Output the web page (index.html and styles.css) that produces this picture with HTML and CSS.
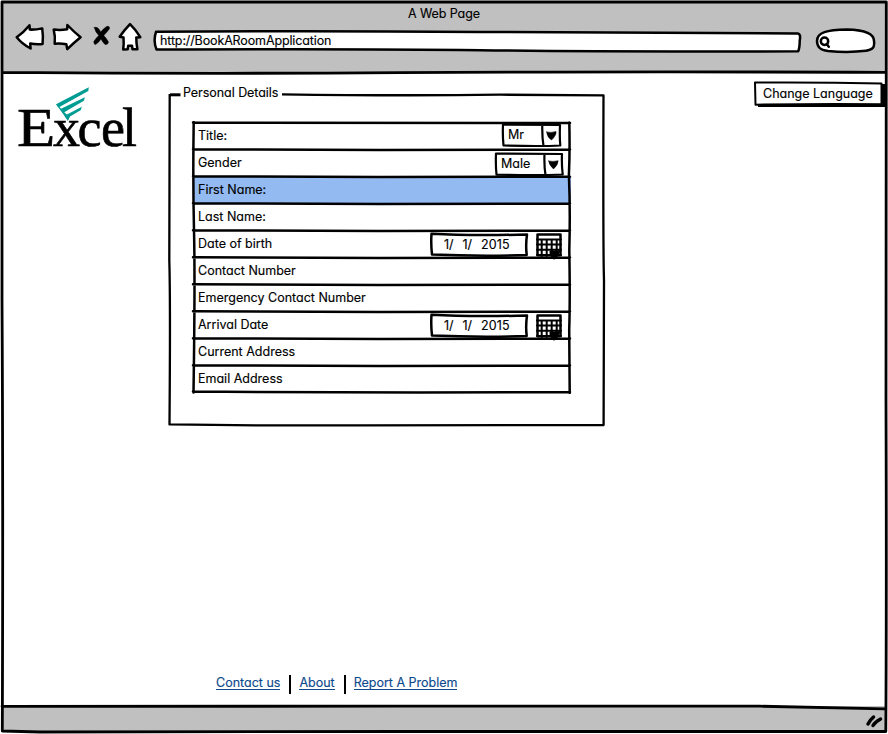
FILE: index.html
```html
<!DOCTYPE html>
<html lang="en">
<head>
<meta charset="utf-8">
<title>A Web Page</title>
<link rel="stylesheet" href="styles.css">
</head>
<body>
<div class="window">
  <header class="chrome">
    <div class="window-title">A Web Page</div>
    <div class="toolbar">
      <svg class="nav back" viewBox="14 22 32 30"><path d="M16.7 37.3Q24 32 29.5 25.2L29.8 29.6Q36 29.8 42.2 28.4Q43.400 36 42.600 44Q36 44.600 30.200 43.500L30.600 48.500Q22 44 16.700 37.300Z"/></svg>
      <svg class="nav forward" viewBox="50 22 34 30"><path d="M53.700 29.600Q60 30.600 67.200 29.300L67.400 25Q74 32 80.600 37.200Q74 42.500 67.300 49.200L66.300 44.300Q60 43 54.700 43.800Q55.400 36 53.700 29.600Z"/></svg>
      <svg class="nav stop" viewBox="92 24 20 24"><path class="solid" d="M94.300 27.500Q98 26 100.700 32Q104 28 107 26.200Q110 26 109.500 28.700Q107 32 103.800 35.500Q106.500 38.500 108.500 42Q108 45 105 44.500Q102.500 42 101 39Q98.500 43 95.500 44.600Q93.500 44 93.800 41.500Q96 38 98.800 35.500Q95 31.500 94.300 27.500Z"/></svg>
      <svg class="nav home" viewBox="117 21 26 31"><path d="M130 24.200Q124 30.500 119.700 36.800L123.500 37.400Q124 44 123.200 49.400L127.700 49.200L128.200 45.800H132L132.500 49.200L137.400 49.300Q136.200 43 136.300 37.600L140.300 37.200Q135.500 29.500 130 24.200Z"/></svg>
      <div class="address">
        <svg viewBox="153 30 649 24"><path d="M156 31.800Q300 30.800 480 31.900T798 33.500Q801 34 799.700 41Q799.700 48 798.200 51.300Q600 51.900 480 50.200T156.500 49.500Q153 41 156 31.800Z"/></svg>
        <span class="t url">http://BookARoomApplication</span>
      </div>
      <svg class="search" viewBox="814 27 63 27"><path d="M817 41C817 32 827 30 847 29.500C867 30 874 34 874 41C875 48 872 50 866 50.800Q848 53 828 51C820 50 817 47 817 41Z"/><circle cx="824.500" cy="41.300" r="3.700"/><path d="M827 44.500L828.800 46.800"/></svg>
    </div>
  </header>

  <main class="page">
    <svg class="logo" viewBox="14 84 126 76" role="img" aria-label="Excel">
      <g class="feather"><path d="M56 104.300L88.800 87.300L88.300 91L58.500 107.500Z"/><path d="M60.500 109L84.900 97.200L83.900 100.700L63 113Z"/><path d="M64.500 115.800L81.900 106.700L80.600 110.200L70 116.500L67.800 120.800Z"/><path d="M56 104.300L58.500 106L64 112L69.500 117L67.800 120.800L63.500 114.500Z"/></g>
      <text transform="translate(17 146) scale(1.16 1)" x="0" y="0">E</text>
      <text x="53 77.500 101 122" y="146">xcel</text>
    </svg>

    <section class="group">
      <svg class="outline" viewBox="167 91 440 337"><path class="stub" d="M180.500 94.800H170"/><path d="M282 94.300Q400 96 500 94.700L603.500 95.300Q603 250 604 280L603.600 425Q450 424.700 360 425.300T169.500 424.400Q170.500 300 169.300 260L169.700 94"/></svg>
      <h1 class="t legend">Personal Details</h1>
      <div class="grid">
        <svg class="rules" viewBox="191 121 381 273"><path d="M193 122.600Q380 122.300 570 123M193 149.300L380 150 570 149.500M193 176.300L380 177 570 176.700M193 203.200L380 204 570 203.500M193 230.300L380 231 570 230.600M193 257.300L380 258 570 257.500M193 284.300L380 285 570 284.500M193 311.300L380 312 570 311.600M193 338.200L380 339 570 338.500M193 365.200L380 366 570 365.500M193 391.500Q380 393 570 392M193.700 122Q192.800 180 194 230T193.500 392.500M569.300 122.500Q570 150 568.900 175Q570.400 210 569.300 250Q570.200 300 569.200 330L569.700 393"/></svg>
        <div class="row"><span class="t">Title:</span>
          <div class="select select-title"><svg viewBox="501 123 61 25"><path d="M503 124.500L560 125Q559.500 138 560.300 145.500Q540 146.500 503.500 145.500Q502.500 135 503 124.500ZM542.300 125Q542 136 543.500 146"/><path class="solid" d="M546.700 132Q551 133 556 131.500Q556.800 135 551.500 140Q547 137 546.700 132Z"/></svg><span class="t">Mr</span></div></div>
        <div class="row"><span class="t">Gender</span>
          <div class="select select-gender"><svg viewBox="494 151 70 26"><path d="M496 153.500L562 154Q561.500 164 562.700 174.500Q540 175.500 496.500 174.700Q495.500 164 496 153.500ZM544.500 154Q544 166 545.500 175"/><path class="solid" d="M548.700 161Q553 162 558.200 160.700Q558 165 553.500 169Q549 165 548.700 161Z"/></svg><span class="t">Male</span></div></div>
        <div class="row selected"><span class="t">First Name:</span></div>
        <div class="row"><span class="t">Last Name:</span></div>
        <div class="row"><span class="t">Date of birth</span>
          <div class="date"><svg class="datebox" viewBox="429 231 100 27"><path d="M431.500 233.700Q470 236 527 234.500Q525.500 245 526.700 255Q480 256.500 432 254.500Q430.800 245 431.500 233.700Z"/></svg><span class="t d1">1/</span><span class="t d2">1/</span><span class="t d3">2015</span></div>
          <svg class="calendar" viewBox="535 232 28 30"><path d="M537.500 234.500H560.500V255.300H537.500Z"/><path class="cells" d="M537 239.500H561M537 244.500H561M537 249.700H561M537 255H561M541.700 240V256M546.700 240V256M551.700 240V256M556.700 240V256"/><path class="solid" d="M550 251L560 250.500Q559 256 554 259.500Q552 256 550 254Z"/></svg></div>
        <div class="row"><span class="t">Contact Number</span></div>
        <div class="row"><span class="t">Emergency Contact Number</span></div>
        <div class="row"><span class="t">Arrival Date</span>
          <div class="date"><svg class="datebox" viewBox="429 231 100 27"><path d="M431.500 233.700Q470 236 527 234.500Q525.500 245 526.700 255Q480 256.500 432 254.500Q430.800 245 431.500 233.700Z"/></svg><span class="t d1">1/</span><span class="t d2">1/</span><span class="t d3">2015</span></div>
          <svg class="calendar" viewBox="535 232 28 30"><path d="M537.500 234.500H560.500V255.300H537.500Z"/><path class="cells" d="M537 239.500H561M537 244.500H561M537 249.700H561M537 255H561M541.700 240V256M546.700 240V256M551.700 240V256M556.700 240V256"/><path class="solid" d="M550 251L560 250.500Q559 256 554 259.500Q552 256 550 254Z"/></svg></div>
        <div class="row"><span class="t">Current Address</span></div>
        <div class="row"><span class="t">Email Address</span></div>
      </div>
    </section>

    <div class="language">
      <svg viewBox="753 80 135 30"><path class="shadow" d="M758 84H886V107H758Z"/><path d="M755 82.500Q820 82 881.500 83.500V104.200Q820 103.500 755.500 104.700Z"/></svg>
      <span class="t">Change Language</span>
    </div>
  </main>

  <nav class="links">
    <a class="t" href="#">Contact us</a><i class="bar"></i><a class="t" href="#">About</a><i class="bar"></i><a class="t" href="#">Report A Problem</a>
  </nav>
  <footer class="status"><svg viewBox="864 713 20 18"><path d="M868 724Q870 720 873.500 717M873 725.500Q875 722 880.500 719"/></svg></footer>
  <svg class="frame" viewBox="0 0 888 734"><path d="M2 2H886.300Q885.300 200 886 400T885.800 731.500Q600 732.300 400 731.500L40 732L2.300 731Q3.200 500 2 300ZM2 72.400Q200 74 400 72.700T885 72.300M2 706.300Q200 707 400 706.200T760 706.200L885 708.800"/></svg>
</div>
</body>
</html>
```
FILE: styles.css
```css
* { box-sizing: border-box; }
body { margin: 0; background: #fff; }
svg { display: block; fill: none; stroke: #000; stroke-width: 2.5; stroke-linejoin: round; stroke-linecap: round; }
.window {
  position: relative;
  display: flex;
  flex-direction: column;
  width: 888px;
  height: 734px;
  overflow: hidden;
  font: 12.5px/16px Inter, "Liberation Sans", sans-serif;
  font-feature-settings: "cv11";
  -webkit-text-stroke: .15px;
  color: #000;
}
.frame { position: absolute; inset: 0; width: 888px; height: 734px; stroke-width: 2.8; pointer-events: none; }
.t { white-space: nowrap; letter-spacing: 0; }

.chrome { flex: none; height: 71px; margin: 2px 2px 0; background: #c0c0c0; }
.window-title { padding-top: 4px; text-align: center; line-height: 16px; letter-spacing: -.1px; }
.toolbar { display: flex; align-items: flex-start; padding-left: 12px; }
.nav path, .address path, .search path { fill: #fff; }
.nav .solid, .solid { fill: #000 !important; stroke-width: .5; }
.back { width: 32px; height: 30px; }
.forward { width: 34px; height: 30px; margin-left: 4px; }
.stop { width: 20px; height: 24px; margin: 2px 0 0 8px; }
.home { width: 26px; height: 31px; margin: -1px 0 0 5px; }
.address { position: relative; display: flex; width: 649px; height: 24px; margin: 8px 0 0 10px; padding: 3px 0 0 7px; }
.address svg { position: absolute; left: 0; top: 0; width: 649px; height: 24px; }
.address .t { position: relative; letter-spacing: -.13px; }
.search { width: 63px; height: 27px; margin: 5px 0 0 12px; }

.page { display: flex; align-items: flex-start; height: 590px; padding: 7px 0 0 14px; }
.logo { width: 126px; height: 76px; margin-top: 4px; }
.logo .feather { fill: #009c94; stroke: none; }
.logo text { fill: #000; stroke: #000; stroke-width: .6; font: 54px "Liberation Serif", serif; }
.group { position: relative; width: 440px; height: 337px; margin: 11px 0 0 27px; }
.outline { position: absolute; inset: 0; width: 440px; height: 337px; stroke-width: 2.3; stroke-linecap: butt; }
.outline .stub { stroke-width: 3; }
.legend { position: relative; margin: -6px 0 0 16px; font: inherit; line-height: 16px; letter-spacing: -.05px; }
.grid { position: relative; isolation: isolate; width: 381px; margin: 20px 0 0 24px; padding: 2px 1px 0 2px; }
.rules { position: absolute; left: 0; top: 0; z-index: 1; width: 381px; height: 273px; }
.row { display: flex; height: 27px; padding: 5px 0 0 5px; }
.row > * { position: relative; z-index: 2; }
.selected { background: #93baf1; }
.select { display: flex; margin-left: auto; }
.select svg { position: absolute; inset: 0; fill: #fff; width: 100%; height: 100%; stroke-width: 2.2; }
.select .t { position: relative; }
.select-title { width: 61px; height: 25px; margin-top: -5px; margin-right: 9px; padding: 4px 0 0 7px; }
.select-gender { width: 70px; height: 26px; margin-top: -4px; margin-right: 7px; padding: 5px 0 0 7px; }
.date { display: flex; width: 100px; height: 27px; margin: -5px 0 0 auto; padding: 6px 0 0 15px; }
.date .datebox { position: absolute; inset: 0; width: 100px; height: 27px; fill: #fff; }
.date .t { position: relative; width: 18.5px; }
.date .d3 { letter-spacing: .1px; }
.calendar { width: 28px; height: 30px; margin: -4px 8px 0 6px; fill: #fff; }
.calendar .cells { stroke-width: 2; }
.language { position: relative; display: flex; width: 135px; height: 30px; margin-left: 146px; padding: 6px 0 0 10px; }
.language svg { position: absolute; inset: 0; width: 135px; height: 30px; fill: #fff; stroke-width: 2; }
.language .shadow { fill: #000; stroke: none; }
.language .t { position: relative; }

.links { display: flex; height: 43px; padding: 12px 0 0 216px; color: #0d4a8c; }
.links a { height: 15px; color: inherit; text-decoration: none; border-bottom: 1px solid #0d4a8c; line-height: 15px; }
.bar { width: 2px; height: 19px; margin: 0 8px 0 9px; background: #000; }
.status { display: flex; justify-content: flex-end; align-items: flex-start; height: 25px; margin: 0 2px; padding: 7px 2px 0 0; background: #c0c0c0; }
.status svg { width: 20px; height: 18px; stroke-width: 3.5; }
```
